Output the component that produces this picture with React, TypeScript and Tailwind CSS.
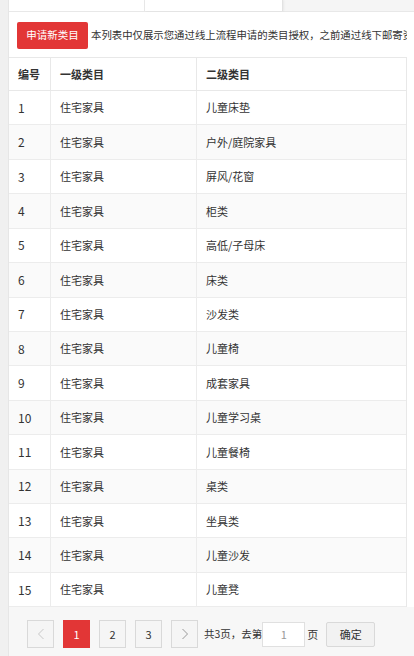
import React from "react";

const rows = [
  "儿童床垫",
  "户外/庭院家具",
  "屏风/花窗",
  "柜类",
  "高低/子母床",
  "床类",
  "沙发类",
  "儿童椅",
  "成套家具",
  "儿童学习桌",
  "儿童餐椅",
  "桌类",
  "坐具类",
  "儿童沙发",
  "儿童凳",
];

const font = { fontFamily: '"Noto Sans CJK SC", "Noto Sans", sans-serif' };

function PageBtn({ children, active }: { children: React.ReactNode; active?: boolean }) {
  return (
    <div
      className={`w-[27px] h-[28px] flex items-center justify-center text-[11px] border ${
        active ? "bg-[#e23636] border-[#e23636] text-white" : "bg-[#f5f5f5] border-[#d9d9d9] text-[#333]"
      }`}
    >
      {children}
    </div>
  );
}

export default function App() {
  return (
    <div className="w-[414px] h-[656px] overflow-hidden bg-[#f2f2f2] flex" style={font}>
      <div className="w-[9px] shrink-0 bg-[#f0f0f0] border-r border-[#e6e6e6]" />
      <div className="flex-1 flex flex-col min-w-0">
        {/* tabs */}
        <div className="h-[12px] flex border-b border-[#e8e8e8] bg-[#f5f5f5] shrink-0">
          <div className="w-[136px] bg-white border-r border-[#e8e8e8]" />
          <div className="w-[138px] bg-white border-r border-[#e2e2e2] shadow-[1px_0_2px_rgba(0,0,0,0.06)]" />
        </div>
        <div className="bg-white flex-1 flex flex-col">
          <div className="w-[398px] h-[45px] flex items-center pl-[8px] pt-[1px] shrink-0 overflow-hidden">
            <div className="w-[71px] h-[27px] bg-[#e23636] text-white text-[10.5px] flex items-center justify-center shrink-0 rounded-[2px]">
              申请新类目
            </div>
            <span className="ml-[3px] text-[10.4px] text-[#333] whitespace-nowrap">
              本列表中仅展示您通过线上流程申请的类目授权，之前通过线下邮寄资质的类目授权请联系小二
            </span>
          </div>
          <div className="w-[398px] border-t border-r border-[#e8e8e8] text-[11px] text-[#333]">
            <div className="flex h-[33px] border-b border-[#e8e8e8] font-bold">
              <div className="w-[42px] border-r border-[#e8e8e8] pl-[9px] flex items-center">编号</div>
              <div className="w-[146px] border-r border-[#e8e8e8] pl-[9px] flex items-center">一级类目</div>
              <div className="flex-1 pl-[9px] flex items-center">二级类目</div>
            </div>
            {rows.map((r, i) => (
              <div
                key={i}
                className={`flex h-[34.43px] border-b border-[#ececec] ${i % 2 === 1 ? "bg-[#fafafa]" : "bg-white"}`}
              >
                <div className="w-[42px] border-r border-[#ececec] pl-[9px] flex items-center text-[12px]">{i + 1}</div>
                <div className="w-[146px] border-r border-[#ececec] pl-[9px] flex items-center">住宅家具</div>
                <div className="flex-1 pl-[9px] flex items-center">{r}</div>
              </div>
            ))}
          </div>
          <div className="flex-1 bg-[#f7f7f7] flex items-start pt-[13px] pl-[18px] text-[11px] text-[#333]">
            <div className="flex gap-[9px] items-center">
              <PageBtn>
                <svg width="8" height="12" viewBox="0 0 8 12" fill="none" stroke="#c8c8c8" strokeWidth="1">
                  <path d="M6.5 1L1.5 6l5 5" />
                </svg>
              </PageBtn>
              <PageBtn active>1</PageBtn>
              <PageBtn>2</PageBtn>
              <PageBtn>3</PageBtn>
              <PageBtn>
                <svg width="8" height="12" viewBox="0 0 8 12" fill="none" stroke="#999" strokeWidth="1">
                  <path d="M1.5 1l5 5-5 5" />
                </svg>
              </PageBtn>
            </div>
            <div className="flex items-center h-[28px] ml-[6px]">
              <span className="text-[10.5px]">共3页，去第</span>
              <div className="w-[43px] h-[25px] bg-white border border-[#e0e0e0] flex items-center justify-center text-[#999]">
                1
              </div>
              <span className="ml-[2px]">页</span>
              <div className="ml-[8px] w-[49px] h-[25px] bg-[#f2f2f2] border border-[#d9d9d9] rounded-[2px] flex items-center justify-center">
                确定
              </div>
            </div>
          </div>
        </div>
      </div>
    </div>
  );
}
